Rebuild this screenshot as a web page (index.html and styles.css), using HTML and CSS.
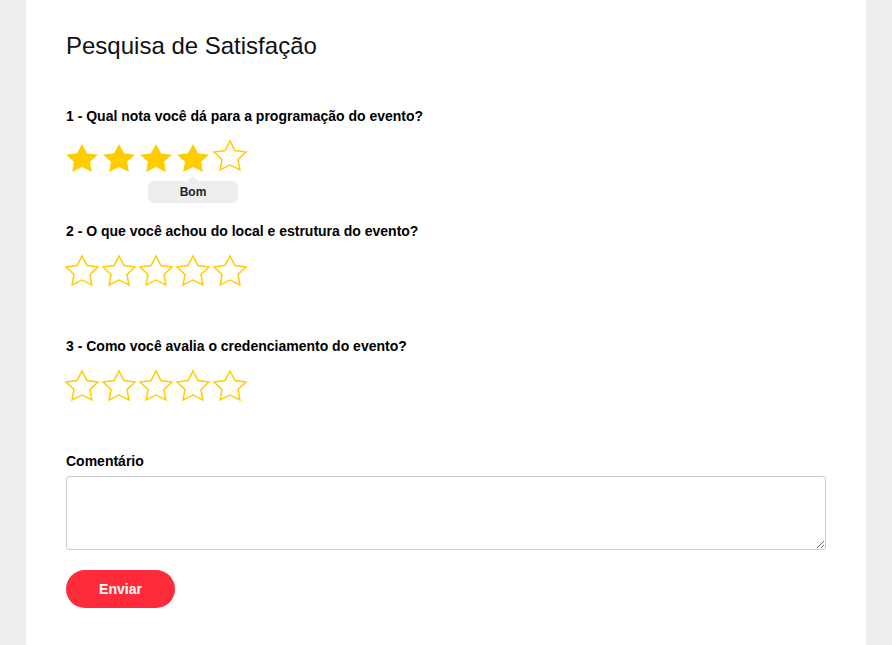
FILE: index.html
```html
<!DOCTYPE html>
<html>
<head lang="pt-BR">
    <meta charset="UTF-8">
    <title>Pesquisa de Satisfação</title>
    <link rel="stylesheet" href="styles.css">
</head>
<body>
<div class="page">
    <h1 class="title">Pesquisa de Satisfação</h1>

    <div class="question">
        <p class="label">1 - Qual nota você dá para a programação do evento?</p>
        <div class="stars">
            <svg class="star on" viewBox="2 2 20 19.1" preserveAspectRatio="none"><path d="M12 2l3.09 6.26L22 9.27l-5 4.87 1.18 6.88L12 17.77l-6.18 3.25L7 14.14 2 9.27l6.91-1.01z"/></svg>
            <svg class="star on" viewBox="2 2 20 19.1" preserveAspectRatio="none"><path d="M12 2l3.09 6.26L22 9.27l-5 4.87 1.18 6.88L12 17.77l-6.18 3.25L7 14.14 2 9.27l6.91-1.01z"/></svg>
            <svg class="star on" viewBox="2 2 20 19.1" preserveAspectRatio="none"><path d="M12 2l3.09 6.26L22 9.27l-5 4.87 1.18 6.88L12 17.77l-6.18 3.25L7 14.14 2 9.27l6.91-1.01z"/></svg>
            <div class="star-wrap">
                <svg class="star on" viewBox="2 2 20 19.1" preserveAspectRatio="none"><path d="M12 2l3.09 6.26L22 9.27l-5 4.87 1.18 6.88L12 17.77l-6.18 3.25L7 14.14 2 9.27l6.91-1.01z"/></svg>
                <span class="tip">Bom</span>
            </div>
            <svg class="star" viewBox="2 2 20 19.1" preserveAspectRatio="none"><path d="M12 2l3.09 6.26L22 9.27l-5 4.87 1.18 6.88L12 17.77l-6.18 3.25L7 14.14 2 9.27l6.91-1.01z"/></svg>
        </div>
    </div>

    <div class="question">
        <p class="label">2 - O que você achou do local e estrutura do evento?</p>
        <div class="stars">
            <svg class="star" viewBox="2 2 20 19.1" preserveAspectRatio="none"><path d="M12 2l3.09 6.26L22 9.27l-5 4.87 1.18 6.88L12 17.77l-6.18 3.25L7 14.14 2 9.27l6.91-1.01z"/></svg>
            <svg class="star" viewBox="2 2 20 19.1" preserveAspectRatio="none"><path d="M12 2l3.09 6.26L22 9.27l-5 4.87 1.18 6.88L12 17.77l-6.18 3.25L7 14.14 2 9.27l6.91-1.01z"/></svg>
            <svg class="star" viewBox="2 2 20 19.1" preserveAspectRatio="none"><path d="M12 2l3.09 6.26L22 9.27l-5 4.87 1.18 6.88L12 17.77l-6.18 3.25L7 14.14 2 9.27l6.91-1.01z"/></svg>
            <svg class="star" viewBox="2 2 20 19.1" preserveAspectRatio="none"><path d="M12 2l3.09 6.26L22 9.27l-5 4.87 1.18 6.88L12 17.77l-6.18 3.25L7 14.14 2 9.27l6.91-1.01z"/></svg>
            <svg class="star" viewBox="2 2 20 19.1" preserveAspectRatio="none"><path d="M12 2l3.09 6.26L22 9.27l-5 4.87 1.18 6.88L12 17.77l-6.18 3.25L7 14.14 2 9.27l6.91-1.01z"/></svg>
        </div>
    </div>

    <div class="question">
        <p class="label">3 - Como você avalia o credenciamento do evento?</p>
        <div class="stars">
            <svg class="star" viewBox="2 2 20 19.1" preserveAspectRatio="none"><path d="M12 2l3.09 6.26L22 9.27l-5 4.87 1.18 6.88L12 17.77l-6.18 3.25L7 14.14 2 9.27l6.91-1.01z"/></svg>
            <svg class="star" viewBox="2 2 20 19.1" preserveAspectRatio="none"><path d="M12 2l3.09 6.26L22 9.27l-5 4.87 1.18 6.88L12 17.77l-6.18 3.25L7 14.14 2 9.27l6.91-1.01z"/></svg>
            <svg class="star" viewBox="2 2 20 19.1" preserveAspectRatio="none"><path d="M12 2l3.09 6.26L22 9.27l-5 4.87 1.18 6.88L12 17.77l-6.18 3.25L7 14.14 2 9.27l6.91-1.01z"/></svg>
            <svg class="star" viewBox="2 2 20 19.1" preserveAspectRatio="none"><path d="M12 2l3.09 6.26L22 9.27l-5 4.87 1.18 6.88L12 17.77l-6.18 3.25L7 14.14 2 9.27l6.91-1.01z"/></svg>
            <svg class="star" viewBox="2 2 20 19.1" preserveAspectRatio="none"><path d="M12 2l3.09 6.26L22 9.27l-5 4.87 1.18 6.88L12 17.77l-6.18 3.25L7 14.14 2 9.27l6.91-1.01z"/></svg>
        </div>
    </div>

    <label class="label comment-label" for="comentario">Comentário</label>
    <textarea class="comment" id="comentario"></textarea>

    <button class="send" type="button">Enviar</button>
</div>
</body>
</html>
```

FILE: styles.css
```css
*{
    margin:0;
    padding:0;
    box-sizing: border-box;
}
html,body{
    height:100%;
}
body{
    background-color: #eee;
    font-family: "Liberation Sans", Arial, sans-serif;
    color:#000;
}
.page{
    width:840px;
    min-height:100%;
    margin-left:26px;
    padding:32px 40px 30px;
    background-color: #fff;
}
.title{
    font-size:24px;
    font-weight:normal;
    color:#111;
    line-height:28px;
    margin-bottom:48px;
}
.label{
    display:block;
    font-size:14px;
    font-weight:bold;
    line-height:16px;
}
.question{
    height:115px;
}
.stars{
    display:flex;
    align-items:flex-start;
    gap:5px;
    margin-top:17px;
}
.star{
    width:32px;
    height:29px;
    display:block;
    overflow:visible;
    fill:#fff;
    stroke:#ffcc00;
    stroke-width:0.95;
    stroke-linejoin:miter;
}
/*estrela cheia fica um pouco mais baixa*/
.star.on{
    height:28px;
    margin-top:3px;
    fill:#ffcc00;
    stroke:none;
}
.star-wrap{
    position:relative;
}
/*tooltip da nota*/
.tip{
    position:absolute;
    top:40px;
    left:-29px;
    width:90px;
    height:22px;
    line-height:22px;
    text-align:center;
    font-size:12px;
    font-weight:bold;
    color:#222;
    background-color: #eee;
    border-radius:6px;
}
.tip:before{
    content:'';
    position:absolute;
    top:-5px;
    left:40px;
    border-left:5px solid transparent;
    border-right:5px solid transparent;
    border-bottom:5px solid #eee;
}
.comment{
    display:block;
    width:760px;
    height:74px;
    margin-top:7px;
    border:1px solid #ccc;
    border-radius:3px;
    resize:vertical;
    font-family: inherit;
}
.send{
    display:block;
    width:109px;
    height:38px;
    margin-top:20px;
    border:none;
    border-radius:19px;
    background-color: #ff2b3a;
    color:#fff;
    font-family: inherit;
    font-size:14px;
    font-weight:bold;
}
```
